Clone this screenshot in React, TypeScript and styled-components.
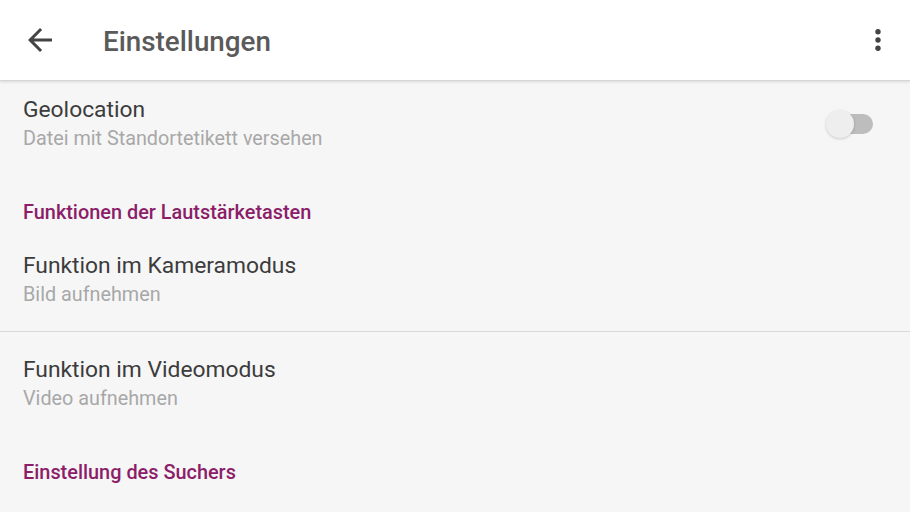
import React, { useState } from 'react';
import styled, { createGlobalStyle } from 'styled-components';

const GlobalStyle = createGlobalStyle`
  html, body {
    margin: 0;
    padding: 0;
    background: #f6f6f6;
  }
  body {
    font-family: Roboto, "Noto Sans", "Liberation Sans", sans-serif;
    overflow: hidden;
  }
`;

const Page = styled.div`
  width: 910px;
  height: 512px;
  background: #f6f6f6;
  overflow: hidden;
  position: relative;
`;

const Toolbar = styled.header`
  position: relative;
  z-index: 2;
  height: 80px;
  box-sizing: border-box;
  background: #ffffff;
  display: flex;
  align-items: center;
  padding: 0 14px 0 22px;
  box-shadow: 0 1px 0 #d6d6d6, 0 2px 3px rgba(0, 0, 0, 0.12);
`;

const IconButton = styled.button`
  border: none;
  background: none;
  padding: 0;
  display: flex;
  align-items: center;
  justify-content: center;
  cursor: pointer;
  color: #444;
`;

const ToolbarTitle = styled.h1`
  margin: 2px 0 0 45px;
  flex: 1;
  font-size: 27.8px;
  font-weight: 500;
  color: #5a5a5a;
`;

const List = styled.main`
  display: flex;
  flex-direction: column;
`;

const Row = styled.div<{ $first?: boolean; $divider?: boolean }>`
  display: flex;
  align-items: center;
  padding: ${p => (p.$first ? '16px' : '24px')} 36px ${p => (p.$divider ? '23px' : '24px')} 23px;
  border-bottom: ${p => (p.$divider ? '1px solid #d9d9d9' : 'none')};
`;

const RowText = styled.div`
  flex: 1;
  display: flex;
  flex-direction: column;
  gap: 2px;
`;

const RowTitle = styled.div`
  font-size: 22.8px;
  line-height: 28px;
  color: #3c3c3c;
`;

const RowSummary = styled.div`
  font-size: 19.8px;
  line-height: 26px;
  color: #a8a8a8;
`;

const SectionHeader = styled.div`
  padding: 25px 23px 3px;
  font-size: 19.9px;
  line-height: 24px;
  font-weight: 500;
  color: #8c1d69;
`;

const Switch = styled.button<{ $on: boolean }>`
  position: relative;
  width: 48px;
  height: 28px;
  border: none;
  background: none;
  padding: 0;
  cursor: pointer;

  &::before {
    content: '';
    position: absolute;
    left: 12px;
    right: 1px;
    top: 4px;
    height: 20px;
    border-radius: 10px;
    background: ${p => (p.$on ? '#c58bb3' : '#bdbdbd')};
  }

  &::after {
    content: '';
    position: absolute;
    top: 0;
    left: ${p => (p.$on ? '20px' : '0')};
    width: 28px;
    height: 28px;
    border-radius: 50%;
    background: ${p => (p.$on ? '#8c1d69' : '#eeeeee')};
    box-shadow: 0 1px 3px rgba(0, 0, 0, 0.18);
  }
`;

const BackIcon = () => (
  <svg width="36" height="36" viewBox="0 0 24 24" fill="currentColor">
    <path d="M20 11H7.83l5.59-5.59L12 4l-8 8 8 8 1.41-1.41L7.83 13H20v-2z" />
  </svg>
);

const MoreIcon = () => (
  <svg width="36" height="36" viewBox="0 0 24 24" fill="#444">
    <circle cx="12" cy="6.5" r="1.8" />
    <circle cx="12" cy="12" r="1.8" />
    <circle cx="12" cy="17.5" r="1.8" />
  </svg>
);

const App: React.FC = () => {
  const [geo, setGeo] = useState(false);

  return (
    <Page>
      <GlobalStyle />
      <Toolbar>
        <IconButton aria-label="Zurück">
          <BackIcon />
        </IconButton>
        <ToolbarTitle>Einstellungen</ToolbarTitle>
        <IconButton aria-label="Mehr">
          <MoreIcon />
        </IconButton>
      </Toolbar>

      <List>
        <Row $first>
          <RowText>
            <RowTitle>Geolocation</RowTitle>
            <RowSummary>Datei mit Standortetikett versehen</RowSummary>
          </RowText>
          <Switch $on={geo} onClick={() => setGeo(v => !v)} aria-label="Geolocation" />
        </Row>

        <SectionHeader>Funktionen der Lautstärketasten</SectionHeader>
        <Row $divider>
          <RowText>
            <RowTitle>Funktion im Kameramodus</RowTitle>
            <RowSummary>Bild aufnehmen</RowSummary>
          </RowText>
        </Row>
        <Row>
          <RowText>
            <RowTitle>Funktion im Videomodus</RowTitle>
            <RowSummary>Video aufnehmen</RowSummary>
          </RowText>
        </Row>

        <SectionHeader>Einstellung des Suchers</SectionHeader>
      </List>
    </Page>
  );
};

export default App;
